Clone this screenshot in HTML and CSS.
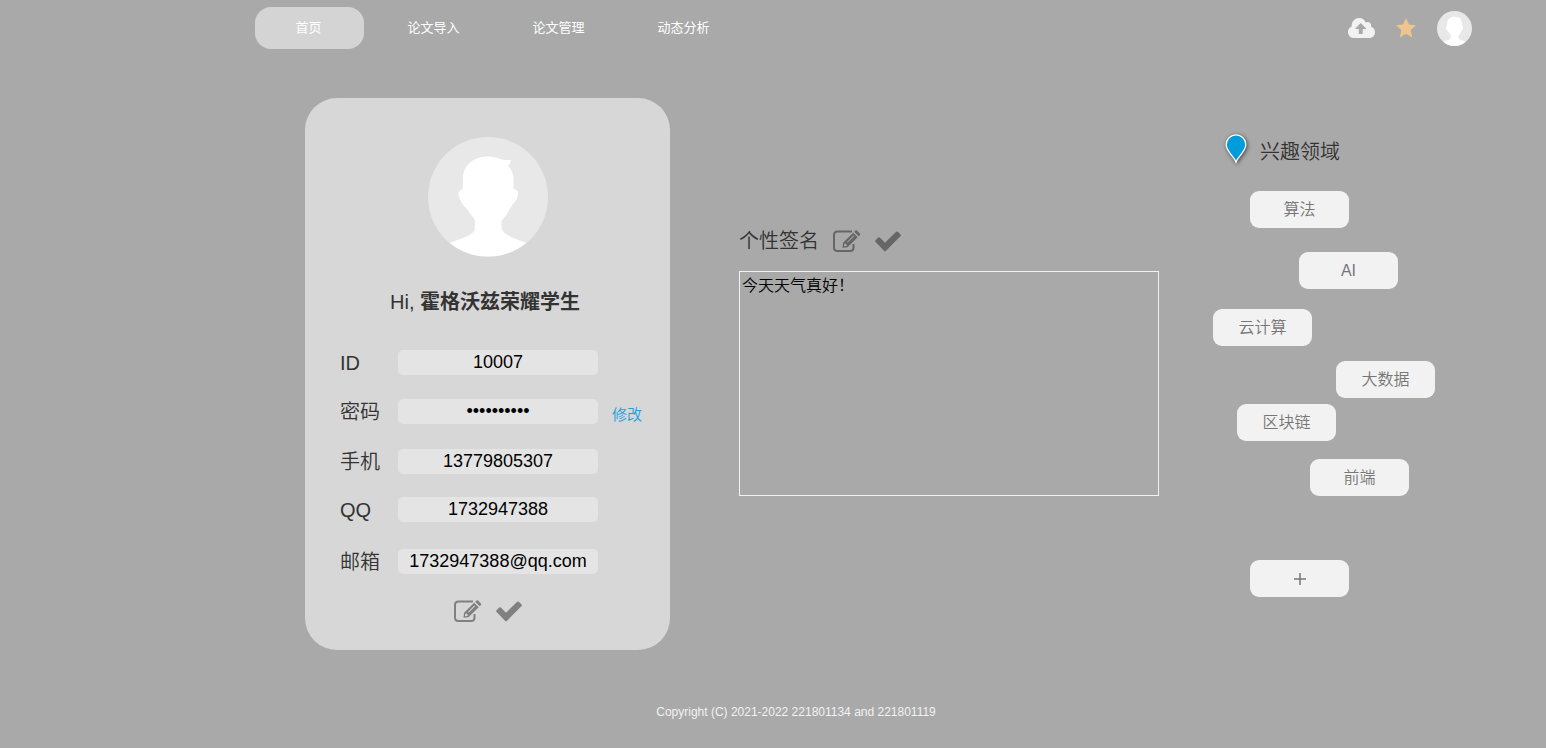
FILE: index.html
```html
<!DOCTYPE html>
<html lang="zh-CN">
<head>
<meta charset="utf-8">
<title>首页</title>
<link rel="stylesheet" href="styles.css">
</head>
<body>
<svg class="defs" aria-hidden="true">
  <symbol id="avatar" viewBox="0 0 120 120">
    <circle cx="60" cy="60" r="60" fill="#e8e8e8"/>
    <path fill="#fff" d="M22 106C34 101 47 98 47 91V84C45 79 42 77 39 72C36 69 33 66 32 62C30 58 29 54 34 52.500C35 52 35 50 35 41C35 28 46 19.500 60 19.500C69 19 71 24 83 23Q82 27 80 29C84 33 85.500 37 85.500 42V51C86 53 90 52 90 56C90 60 88 64 86 66C83 69 82 72 79 77C77 80 73.500 83 73.500 85V91C75 98 86 101 98 106A60 60 0 0 1 22 106Z"/>
  </symbol>
  <symbol id="edit" viewBox="0 0 28 22">
    <path fill="none" stroke="currentColor" stroke-width="2" d="M19 1.500H4.500Q1 1.500 1 5V17.500Q1 21 4.500 21H17Q20.500 21 20.500 17.500V14"/>
    <path fill="currentColor" fill-rule="evenodd" d="M9.500 17.700L10 12.800L20.200 2.700L24.700 7.200L14.500 17.200ZM11.300 14L11 16.200L13.300 16L14 15.200L12.200 13.200ZM14 11.900L14.700 12.600L21 6.300L20.300 5.600Z"/>
    <path fill="currentColor" d="M21.200 1.800L22.500 .5Q23.200 0 24 .6L27.100 3.700Q27.600 4.300 27 5L25.700 6.300Z"/>
  </symbol>
  <symbol id="check" viewBox="0 0 26 21">
    <path fill="currentColor" d="M.4 9.200L3.200 6.500Q4 5.900 4.800 6.500L10 11.800L21.200.7Q22 .1 22.800.7L25.600 3.500Q26.200 4.300 25.600 5.100L10.800 19.900Q10 20.600 9.200 19.900L.4 10.800Q-.1 10 .4 9.200Z"/>
  </symbol>
</svg>

<header class="topbar">
  <nav class="nav">
    <a class="nav-link active" href="#">首页</a>
    <a class="nav-link" href="#">论文导入</a>
    <a class="nav-link" href="#">论文管理</a>
    <a class="nav-link" href="#">动态分析</a>
  </nav>
  <div class="tools">
    <button class="icon-btn" type="button" aria-label="上传">
      <svg width="27" height="20" viewBox="0 0 27 20"><path fill="#f2f2f2" fill-rule="evenodd" d="M6 20A6 6 0 0 1 3.600 8.500C3.400 3.500 7 0 11.200 0C14.500 0 16.800 2 17.700 4.600C20.600 2.800 24 5.200 23 8.700C25.500 9.400 27 11.700 27 14.200C27 17.500 24.500 20 21.300 20ZM12.700 5L7.500 10.200V11H10.800V16H14.700V11H18V10.200Z"/></svg>
    </button>
    <button class="icon-btn" type="button" aria-label="收藏">
      <svg width="20" height="20" viewBox="0 0 20 20"><path fill="#f0c48d" d="M10 0L12.900 6.500L20 7.200L14.700 12.100L16.200 19.500L10 15.800L3.800 19.500L5.300 12.100L0 7.200L7.100 6.500Z"/></svg>
    </button>
    <button class="icon-btn" type="button" aria-label="个人中心"><svg width="35" height="35"><use href="#avatar"/></svg></button>
  </div>
</header>

<main class="main">
  <section class="card">
    <svg class="portrait" width="120" height="120"><use href="#avatar"/></svg>
    <p class="greeting">Hi, <strong>霍格沃兹荣耀学生</strong></p>
    <form class="fields">
      <label for="uid">ID</label>
      <input id="uid" type="text" value="10007">
      <label for="pwd">密码</label>
      <input id="pwd" type="password" value="abcdefghij">
      <a class="change" href="#">修改</a>
      <label for="phone">手机</label>
      <input id="phone" type="text" value="13779805307">
      <label for="qq">QQ</label>
      <input id="qq" type="text" value="1732947388">
      <label for="mail">邮箱</label>
      <input id="mail" type="text" value="1732947388@qq.com">
    </form>
    <div class="actions">
      <button class="icon-btn" type="button" aria-label="编辑资料"><svg width="28" height="22"><use href="#edit"/></svg></button>
      <button class="icon-btn" type="button" aria-label="保存资料"><svg width="26" height="21"><use href="#check"/></svg></button>
    </div>
  </section>

  <section class="signature">
    <div class="signature-head">
      <label class="title" for="sign">个性签名</label>
      <button class="icon-btn" type="button" aria-label="编辑签名"><svg width="28" height="22"><use href="#edit"/></svg></button>
      <button class="icon-btn" type="button" aria-label="保存签名"><svg width="26" height="21"><use href="#check"/></svg></button>
    </div>
    <textarea id="sign" class="signature-text">今天天气真好！</textarea>
  </section>

  <section class="interests">
    <div class="interests-head">
      <svg class="pin" width="22" height="30" viewBox="0 0 22 30"><path fill="#009bdb" stroke="#fff" stroke-width="1.300" d="M11 28C9.500 23.500 1.200 17 1.200 10.700A9.800 9.800 0 0 1 20.800 10.700C20.800 17 12.500 23.500 11 28Z"/></svg>
      <h2 class="title">兴趣领域</h2>
    </div>
    <div class="tags">
      <button class="tag tag-algo" type="button">算法</button>
      <button class="tag tag-ai" type="button">AI</button>
      <button class="tag tag-cloud" type="button">云计算</button>
      <button class="tag tag-data" type="button">大数据</button>
      <button class="tag tag-chain" type="button">区块链</button>
      <button class="tag tag-front" type="button">前端</button>
      <button class="tag tag-add" type="button" aria-label="添加"><svg width="12" height="12" viewBox="0 0 12 12"><path stroke="#777" stroke-width="1.500" d="M6 0V12M0 6H12"/></svg></button>
    </div>
  </section>
</main>

<footer class="footer">Copyright (C) 2021-2022 221801134 and 221801119</footer>
</body>
</html>
```
FILE: styles.css
```css
* {
  box-sizing: border-box;
}

body {
  margin: 0;
  background: #a9a9a9;
  color: #333;
  font-family: "Liberation Sans", "Noto Sans CJK SC", sans-serif;
}

.defs {
  position: absolute;
  width: 0;
  height: 0;
}

svg {
  display: block;
}

button {
  font: inherit;
  cursor: pointer;
}

.icon-btn {
  padding: 0;
  border: 0;
  background: none;
  color: inherit;
}

.topbar {
  display: flex;
  align-items: center;
  justify-content: space-between;
  padding: 7px 74px 7px 255px;
}

.nav {
  display: flex;
  gap: 16px;
}

.nav-link {
  width: 109px;
  padding-right: 2px;
  border-radius: 16px;
  color: #fff;
  font-size: 13px;
  line-height: 42px;
  text-align: center;
  text-decoration: none;
}

.nav-link.active {
  background: #d4d4d4;
}

.tools {
  display: flex;
  align-items: center;
  gap: 21px;
}

.main {
  display: grid;
  grid-template-columns: 365px minmax(0, 1fr) 222px;
  align-items: start;
  padding: 42px 111px 0 305px;
}

.card {
  padding: 39px 28px 28px 35px;
  border-radius: 32px;
  background: #d7d7d7;
}

.portrait {
  margin-left: 88px;
}

.greeting {
  margin: 30px 0 33px;
  padding-right: 12px;
  font-size: 20px;
  line-height: 30px;
  text-align: center;
}

.greeting strong {
  font-weight: 700;
}

.fields {
  display: grid;
  grid-template-columns: 58px 200px 1fr;
  grid-template-rows: 49px 50px 48px 52px 25px;
  align-items: start;
}

.fields label {
  grid-column: 1;
  font-size: 20px;
  font-weight: 350;
  line-height: 26px;
}

.fields input {
  width: 200px;
  height: 25px;
  padding: 0;
  border: 0;
  border-radius: 5px;
  background: #e4e4e4;
  color: #000;
  font-family: "Liberation Sans", sans-serif;
  font-size: 18px;
  text-align: center;
}

.change {
  padding-left: 14px;
  color: #1e9fdb;
  font-size: 15px;
  font-weight: 350;
  line-height: 32px;
  text-decoration: none;
}

.actions {
  display: flex;
  align-items: center;
  gap: 14px;
  margin: 26px 0 0 114px;
  color: #808080;
}

.signature {
  margin: 128px 54px 0 69px;
}

.signature-head {
  display: flex;
  align-items: center;
  gap: 14px;
  margin-bottom: 15px;
  color: #666;
}

.title {
  margin: 0;
  color: #333;
  font-size: 20px;
  font-weight: 350;
  line-height: 30px;
}

.signature-text {
  display: block;
  width: 100%;
  height: 225px;
  padding: 2px;
  border: 1px solid #f2f2f2;
  background: transparent;
  color: #000;
  font: 350 16px/20px "Noto Sans CJK SC", sans-serif;
  resize: none;
}

.interests {
  padding-top: 36px;
}

.interests-head {
  display: flex;
  align-items: flex-start;
  gap: 13px;
  margin: 0 0 21px 12px;
}

.interests-head .title {
  line-height: 36px;
}

.pin {
  overflow: visible;
  filter: drop-shadow(1px 1px 2px rgba(0, 0, 0, 0.6));
}

.tags {
  display: flex;
  flex-direction: column;
  align-items: flex-start;
}

.tag {
  display: flex;
  align-items: center;
  justify-content: center;
  width: 99px;
  height: 37px;
  padding: 0;
  border: 0;
  border-radius: 9px;
  background: #f2f2f2;
  color: #777;
  font-size: 16px;
  font-weight: 350;
  line-height: 24px;
}

/* Scattered placement of the interest tags */
.tag-algo {
  margin: 0 0 24px 37px;
}

.tag-ai {
  margin: 0 0 20px 86px;
}

.tag-cloud {
  margin: 0 0 15px;
}

.tag-data {
  margin: 0 0 6px 123px;
}

.tag-chain {
  margin: 0 0 18px 24px;
}

.tag-front {
  margin: 0 0 64px 97px;
}

.tag-add {
  margin-left: 37px;
}

.footer {
  padding: 54px 0 24px 46px;
  color: #f2f2f2;
  font-size: 12px;
  line-height: 16px;
  text-align: center;
}
```
